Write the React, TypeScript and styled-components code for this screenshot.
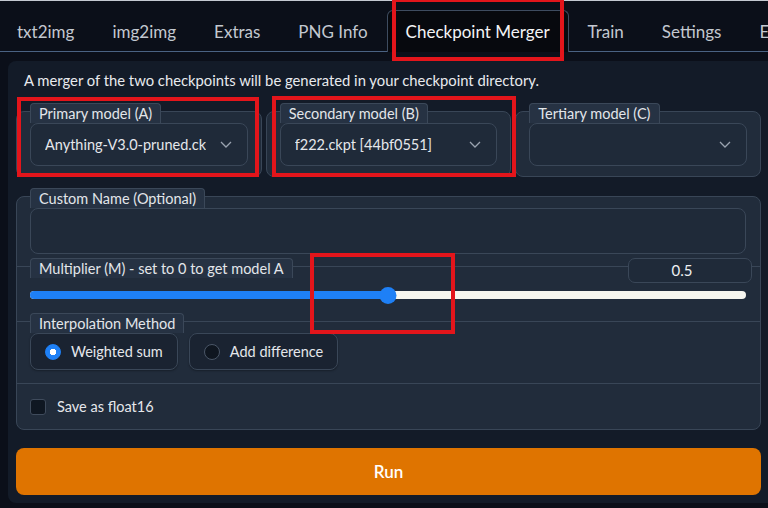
import styled, { createGlobalStyle } from 'styled-components';

const GlobalStyle = createGlobalStyle`
  html, body {
    margin: 0;
    padding: 0;
    background: #0b0f19;
  }
  body {
    font-family: Lato, "Noto Sans", sans-serif;
    color: #e5e7eb;
    overflow: hidden;
  }
`;

const Page = styled.div`
  position: relative;
  width: 768px;
  height: 508px;
  overflow: hidden;
  background: #0b0f19;
`;

const TabBar = styled.div`
  display: flex;
  padding-top: 9px;
  margin-left: -2px;
  border-top: 1px solid #c4c9d1;
  border-bottom: 1px solid #4a6282;
  white-space: nowrap;
`;

const Tab = styled.div<{ $active?: boolean }>`
  height: 42px;
  display: flex;
  align-items: center;
  padding: 0 18px;
  font-size: 17px;
  color: ${(p) => (p.$active ? '#f3f4f6' : '#c3c8d0')};
  background: ${(p) => (p.$active ? '#07090e' : 'transparent')};
  border: 1px solid ${(p) => (p.$active ? '#3e4c60' : 'transparent')};
  border-bottom: none;
  border-radius: 6px 6px 0 0;
  margin-bottom: -1px;
  box-sizing: border-box;
`;

const Panel = styled.div`
  margin: 9px 0 0 8px;
  padding: 8px 7px 8px 8px;
  background: #131b28;
  border-radius: 8px 0 0 8px;
`;

const Intro = styled.div`
  padding: 0 8px;
  font-size: 14.8px;
  line-height: 22px;
  color: #e8eaee;
  margin-bottom: 20px;
`;

const ModelRow = styled.div`
  display: grid;
  grid-template-columns: repeat(3, 1fr);
  gap: 4px;
`;

const Block = styled.div`
  background: #212c3b;
  border: 1px solid #394657;
  border-radius: 8px;
  padding: 0 13px 10px 13px;
`;

const FieldLabel = styled.div`
  display: block;
  width: fit-content;
  margin-top: -9px;
  height: 20px;
  line-height: 19px;
  padding: 0 8px;
  font-size: 14.5px;
  color: #e3e6ea;
  background: #263243;
  border: 1px solid #3b4859;
  border-bottom: none;
  border-radius: 4px 4px 0 0;
  box-sizing: border-box;
  white-space: nowrap;
`;

const Select = styled.div`
  height: 43px;
  box-sizing: border-box;
  background: #1f2a39;
  border: 1px solid #3a4758;
  border-radius: 8px;
  display: flex;
  align-items: center;
  justify-content: space-between;
  gap: 8px;
  padding: 0 15px 0 14px;
  font-size: 14.5px;
  color: #e5e7eb;
  white-space: nowrap;
  overflow: hidden;
`;

const SelectValue = styled.span`
  overflow: hidden;
`;

const Chevron = () => (
  <svg width="12" height="7" viewBox="0 0 12 7" fill="none" style={{ flex: 'none' }}>
    <polyline points="1,1 6,6 11,1" stroke="#9aa3b0" strokeWidth="1.3" />
  </svg>
);

const BigBlock = styled.div`
  margin-top: 19px;
  background: #212c3b;
  border: 1px solid #394657;
  border-radius: 8px;
`;

const Section = styled.div<{ $pb?: number; $pt?: number }>`
  padding: ${(p) => p.$pt ?? 0}px 14px ${(p) => p.$pb ?? 12}px 13px;
  & + & {
    border-top: 1px solid #394657;
  }
`;

const TextBox = styled.div`
  height: 46px;
  box-sizing: border-box;
  background: #1f2a39;
  border: 1px solid #3a4758;
  border-radius: 8px;
`;

const HeaderRow = styled.div`
  display: flex;
  justify-content: space-between;
  align-items: flex-start;
  margin-top: -9px;
  height: 25px;
  & > ${FieldLabel} {
    margin-top: 0;
  }
`;

const NumberBox = styled.div`
  width: 124px;
  height: 25px;
  margin-right: -6px;
  box-sizing: border-box;
  background: #1f2a39;
  border: 1px solid #3a4758;
  border-radius: 7px;
  text-align: center;
  padding-right: 16px;
  font-size: 15px;
  line-height: 23px;
  color: #eef0f3;
`;

const Track = styled.div`
  position: relative;
  margin-top: 8px;
  height: 8px;
  border-radius: 4px;
  background: #f6f6ef;
`;

const Fill = styled.div`
  height: 100%;
  border-radius: 4px;
  background: #1e80f6;
`;

const Thumb = styled.div`
  position: absolute;
  top: -4.5px;
  width: 17px;
  height: 17px;
  border-radius: 50%;
  background: #1e80f6;
  transform: translateX(-50%);
`;

const RadioGroup = styled.div`
  display: flex;
  gap: 11px;
`;

const RadioOption = styled.div`
  height: 37px;
  box-sizing: border-box;
  display: flex;
  align-items: center;
  gap: 10px;
  padding: 0 14px;
  background: #1a2331;
  border: 1px solid #3a4758;
  border-radius: 8px;
  box-shadow: 0 1px 2px rgba(0, 0, 0, 0.3);
  font-size: 14.5px;
  color: #e5e7eb;
  white-space: nowrap;
`;

const RadioDot = styled.span<{ $checked?: boolean }>`
  width: 16px;
  height: 16px;
  box-sizing: border-box;
  border-radius: 50%;
  flex: none;
  background: ${(p) =>
    p.$checked
      ? 'radial-gradient(circle, #ffffff 0 3px, #1e80f6 3.5px)'
      : '#0f1620'};
  border: 1px solid ${(p) => (p.$checked ? '#1e80f6' : '#4a5667')};
`;

const CheckRow = styled.label`
  display: flex;
  align-items: center;
  gap: 11px;
  font-size: 14.5px;
  color: #e5e7eb;
`;

const CheckBox = styled.span`
  width: 16px;
  height: 16px;
  box-sizing: border-box;
  border-radius: 3px;
  background: #0f1722;
  border: 1px solid #3f4b5c;
`;

const RunButton = styled.button`
  display: flex;
  width: 100%;
  align-items: center;
  justify-content: center;
  margin-top: 18px;
  height: 47px;
  border: none;
  border-radius: 8px;
  background: #df7400;
  color: #fff;
  font-family: Lato, "Noto Sans", sans-serif;
  font-size: 17px;
  font-weight: 600;
`;

const Annotation = styled.div<{ $x: number; $y: number; $w: number; $h: number }>`
  position: absolute;
  left: ${(p) => p.$x}px;
  top: ${(p) => p.$y}px;
  width: ${(p) => p.$w}px;
  height: ${(p) => p.$h}px;
  border: 4px solid #e3151b;
  box-sizing: border-box;
  pointer-events: none;
`;

const tabs = ['txt2img', 'img2img', 'Extras', 'PNG Info', 'Checkpoint Merger', 'Train', 'Settings', 'Extensions'];

const models = [
  { label: 'Primary model (A)', value: 'Anything-V3.0-pruned.ck' },
  { label: 'Secondary model (B)', value: 'f222.ckpt [44bf0551]' },
  { label: 'Tertiary model (C)', value: '' },
];

const multiplier = 0.5;

export default function App() {
  return (
    <Page>
      <GlobalStyle />
      <TabBar>
        {tabs.map((t) => (
          <Tab key={t} $active={t === 'Checkpoint Merger'}>
            {t}
          </Tab>
        ))}
      </TabBar>

      <Panel>
        <Intro>A merger of the two checkpoints will be generated in your checkpoint directory.</Intro>

        <ModelRow>
          {models.map((m) => (
            <Block key={m.label}>
              <FieldLabel>{m.label}</FieldLabel>
              <Select>
                <SelectValue>{m.value}</SelectValue>
                <Chevron />
              </Select>
            </Block>
          ))}
        </ModelRow>

        <BigBlock>
          <Section>
            <FieldLabel>Custom Name (Optional)</FieldLabel>
            <TextBox />
          </Section>
          <Section $pb={22}>
            <HeaderRow>
              <FieldLabel>Multiplier (M) - set to 0 to get model A</FieldLabel>
              <NumberBox>{multiplier}</NumberBox>
            </HeaderRow>
            <Track>
              <Fill style={{ width: `${multiplier * 100}%` }} />
              <Thumb style={{ left: `${multiplier * 100}%` }} />
            </Track>
          </Section>
          <Section $pb={13}>
            <FieldLabel>Interpolation Method</FieldLabel>
            <RadioGroup>
              <RadioOption>
                <RadioDot $checked />
                Weighted sum
              </RadioOption>
              <RadioOption>
                <RadioDot />
                Add difference
              </RadioOption>
            </RadioGroup>
          </Section>
          <Section $pt={14} $pb={14}>
            <CheckRow>
              <CheckBox />
              Save as float16
            </CheckRow>
          </Section>
        </BigBlock>

        <RunButton>Run</RunButton>
      </Panel>

      <Annotation $x={392} $y={-2} $w={172} $h={63} />
      <Annotation $x={17} $y={97} $w={242} $h={80} />
      <Annotation $x={272} $y={96} $w={244} $h={81} />
      <Annotation $x={310} $y={253} $w={145} $h={81} />
    </Page>
  );
}
